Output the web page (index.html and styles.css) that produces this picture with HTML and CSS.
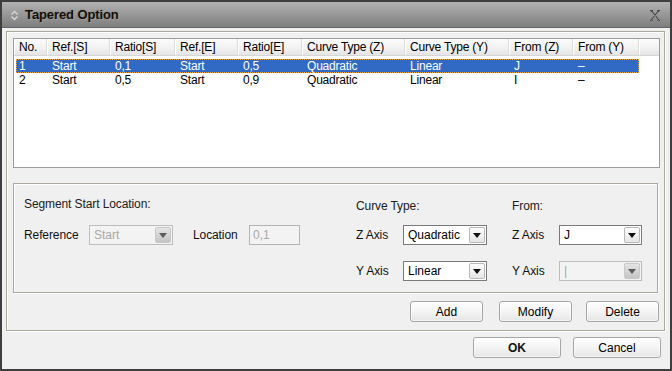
FILE: index.html
```html
<!DOCTYPE html>
<html>
<head>
<meta charset="utf-8">
<link rel="stylesheet" href="styles.css">
</head>
<body>
<div class="window">
  <div class="titlebar">
    <svg class="ticon" width="9" height="11" viewBox="0 0 9 11"><path d="M1.5 4.5 L4.5 1.5 L7.5 4.5 M1.5 6.5 L4.5 9.5 L7.5 6.5" fill="none" stroke="#d8d8d8" stroke-width="1.4"/></svg>
    <span class="title">Tapered Option</span>
    <svg class="close" width="12" height="11" viewBox="0 0 12 11"><path d="M1 0.5 H4 M8 0.5 H11 M1 10.5 H4 M8 10.5 H11 M2.5 1 L9.5 10 M9.5 1 L2.5 10" fill="none" stroke="#4a4a4a" stroke-width="1.3"/><path d="M2.5 2 L9.5 11 M9.5 2 L2.5 11" fill="none" stroke="#c8c8c8" stroke-width="0.6" opacity="0.7"/></svg>
  </div>
  <div class="content">
    <div class="outer">
      <div class="list">
        <div class="hdr">
          <div class="c c1">No.</div>
          <div class="c c2">Ref.[S]</div>
          <div class="c c3">Ratio[S]</div>
          <div class="c c4">Ref.[E]</div>
          <div class="c c5">Ratio[E]</div>
          <div class="c c6">Curve Type (Z)</div>
          <div class="c c7">Curve Type (Y)</div>
          <div class="c c8">From (Z)</div>
          <div class="c c9">From (Y)</div>
          <div class="c cfill"></div>
        </div>
        <div class="row sel">
          <div class="c c1">1</div>
          <div class="c c2">Start</div>
          <div class="c c3">0,1</div>
          <div class="c c4">Start</div>
          <div class="c c5">0,5</div>
          <div class="c c6">Quadratic</div>
          <div class="c c7">Linear</div>
          <div class="c c8">J</div>
          <div class="c c9">&ndash;</div>
        </div>
        <div class="row">
          <div class="c c1">2</div>
          <div class="c c2">Start</div>
          <div class="c c3">0,5</div>
          <div class="c c4">Start</div>
          <div class="c c5">0,9</div>
          <div class="c c6">Quadratic</div>
          <div class="c c7">Linear</div>
          <div class="c c8">I</div>
          <div class="c c9">&ndash;</div>
        </div>
      </div>
      <div class="group">
        <div class="blk blk-left">
          <div class="gtitle">Segment Start Location:</div>
          <div class="frow">
            <span class="lbl lbl-ref">Reference</span>
            <div class="combo dis w84"><span class="val">Start</span><span class="btn"><i class="tri"></i></span></div>
            <span class="lbl lbl-loc">Location</span>
            <div class="tbox dis">0,1</div>
          </div>
        </div>
        <div class="blk blk-curve">
          <div class="gtitle">Curve Type:</div>
          <div class="frow">
            <span class="lbl lbl-ax">Z Axis</span>
            <div class="combo w84"><span class="val">Quadratic</span><span class="btn"><i class="tri"></i></span></div>
          </div>
          <div class="frow frow2">
            <span class="lbl lbl-ax">Y Axis</span>
            <div class="combo w84"><span class="val">Linear</span><span class="btn"><i class="tri"></i></span></div>
          </div>
        </div>
        <div class="blk blk-from">
          <div class="gtitle">From:</div>
          <div class="frow">
            <span class="lbl lbl-ax">Z Axis</span>
            <div class="combo w83"><span class="val">J</span><span class="btn"><i class="tri"></i></span></div>
          </div>
          <div class="frow frow2">
            <span class="lbl lbl-ax">Y Axis</span>
            <div class="combo dis w83"><span class="val">|</span><span class="btn"><i class="tri"></i></span></div>
          </div>
        </div>
      </div>
      <div class="btnrow">
        <button class="pb pb-add">Add</button>
        <button class="pb pb-mod">Modify</button>
        <button class="pb">Delete</button>
      </div>
    </div>
    <div class="dlgrow">
      <button class="pb pb-big ok">OK</button>
      <button class="pb pb-big">Cancel</button>
    </div>
  </div>
</div>
</body>
</html>
```

FILE: styles.css
```css
* { box-sizing: border-box; }
html, body { margin: 0; padding: 0; background: #f0f0f0; }
body {
  font-family: "Liberation Sans", Arial, sans-serif;
  font-size: 12px;
  color: #000;
}
.window {
  width: 672px;
  height: 371px;
  border: 2px solid #3e3e3e;
  background: #f0f0f0;
  display: flex;
  flex-direction: column;
}
.titlebar {
  height: 26px;
  flex: none;
  background: linear-gradient(#b2b2b2, #9a9a9a 45%, #7e7e7e);
  border-bottom: 1px solid #666;
  display: flex;
  align-items: center;
  padding-left: 8px;
  padding-right: 8px;
}
.ticon { flex: none; margin-top: 1px; }
.title {
  font-weight: bold;
  font-size: 13px;
  color: #141008;
  margin-left: 6px;
  text-shadow: 1px 1px 1px rgba(255,255,255,0.25), 0 0 2px rgba(60,40,0,0.35);
  letter-spacing: -0.1px;
}
.close { margin-left: auto; margin-right: 1px; margin-top: 1px; }
.content {
  flex: 1;
  padding: 3px 0 0 4px;
  display: flex;
  flex-direction: column;
}
.outer {
  width: 659px;
  height: 300px;
  border: 1px solid #aca899;
  box-shadow: inset 1px 1px 0 #fff, 1px 1px 0 #fff;
  padding: 6px 0 0 6px;
  display: flex;
  flex-direction: column;
}
.list {
  width: 647px;
  height: 130px;
  flex: none;
  background: #fff;
  border: 1px solid #9c9c9c;
  padding-top: 0;
}
.hdr {
  display: flex;
  height: 17px;
  background: linear-gradient(#fbfbfb, #f1f1f1 60%, #e4e4e4);
  border-bottom: 1px solid #d6d6d6;
  margin-bottom: 3px;
}
.hdr .c {
  border-right: 1px solid #dcdcdc;
  box-shadow: inset 1px 0 0 #fff;
  line-height: 16px;
  color: #000;
}
.c {
  flex: none;
  padding-left: 5px;
  white-space: nowrap;
  overflow: hidden;
  letter-spacing: -0.2px;
}
.c1 { width: 33px; }
.c2 { width: 63px; }
.c3 { width: 65px; }
.c4 { width: 63px; }
.c5 { width: 64px; }
.c6 { width: 103px; }
.c7 { width: 104px; }
.c8 { width: 64px; }
.c9 { width: 66px; }
.cfill { flex: 1; border-right: none !important; }
.row {
  display: flex;
  height: 14px;
  line-height: 14px;
  margin-left: 2px;
  width: 623px;
}
.row .c1 { width: 31px; padding-left: 3px; }
.row.sel {
  background: #316ac5;
  color: #fff;
  outline: 1px dotted #e8a848;
  outline-offset: -1px;
}
.group {
  width: 645px;
  height: 110px;
  flex: none;
  margin-top: 15px;
  border: 1px solid #aca899;
  box-shadow: inset 1px 1px 0 #fff, 1px 1px 0 #fff;
  display: flex;
  padding: 13px 0 0 10px;
}
.blk { flex: none; }
.blk-left { width: 331px; }
.blk-curve { width: 157px; padding-left: 1px; }
.blk-from { width: 140px; }
.gtitle {
  height: 14px;
  line-height: 14px;
  color: #202020;
  letter-spacing: -0.1px;
}
.blk-curve .gtitle, .blk-from .gtitle { margin-top: 2px; margin-bottom: -2px; }
.frow {
  display: flex;
  align-items: center;
  height: 20px;
  margin-top: 14px;
}
.frow2 { margin-top: 16px; }
.lbl { flex: none; color: #101010; letter-spacing: -0.1px; }
.lbl-ref { width: 65px; }
.lbl-loc { width: 56px; margin-left: 20px; }
.lbl-ax { width: 47px; }
.combo {
  flex: none;
  height: 20px;
  border: 1px solid #7a7a7a;
  background: #fff;
  display: flex;
  align-items: center;
  padding: 1px;
}
.w84 { width: 84px; }
.w83 { width: 83px; }
.combo .val { flex: 1; padding-left: 3px; line-height: 16px; }
.combo .btn {
  flex: none;
  width: 16px;
  height: 16px;
  border: 1px solid #b8b8b8;
  border-radius: 2px;
  background: linear-gradient(#fdfdfd, #e6e6e6);
  display: flex;
  align-items: center;
  justify-content: center;
}
.tri {
  width: 0;
  height: 0;
  border-left: 4px solid transparent;
  border-right: 4px solid transparent;
  border-top: 5px solid #111;
  margin-top: 1px;
}
.combo.dis {
  border-color: #bdbdbd;
  background: #f3f3f3;
}
.combo.dis .val { color: #a8a8a8; }
.combo.dis .btn {
  background: linear-gradient(#e4e4e4, #c4c4c4);
  border-color: #c8c8c8;
}
.combo.dis .tri { border-top-color: #5a5a5a; }
.tbox {
  flex: none;
  width: 51px;
  height: 20px;
  border: 1px solid #b4b4b4;
  background: #f3f3f3;
  color: #a8a8a8;
  padding-left: 3px;
  line-height: 18px;
}
.btnrow {
  display: flex;
  justify-content: flex-end;
  margin-top: 8px;
  padding-right: 5px;
  gap: 14px;
}
.pb {
  font-family: "Liberation Sans", Arial, sans-serif;
  font-size: 12px;
  color: #000;
  width: 73px;
  height: 21px;
  padding: 0;
  border: 1px solid #a6a6a6;
  border-radius: 3px;
  background: linear-gradient(#ffffff, #f4f4f4 50%, #e6e6e6);
  box-shadow: inset 0 0 0 1px rgba(255,255,255,0.6);
}
.pb-add { margin-right: 2px; }
.dlgrow {
  display: flex;
  justify-content: flex-end;
  gap: 12px;
  margin-top: 6px;
  padding-right: 9px;
}
.pb-big { width: 88px; }
.ok { font-weight: bold; color: #111; }
```
